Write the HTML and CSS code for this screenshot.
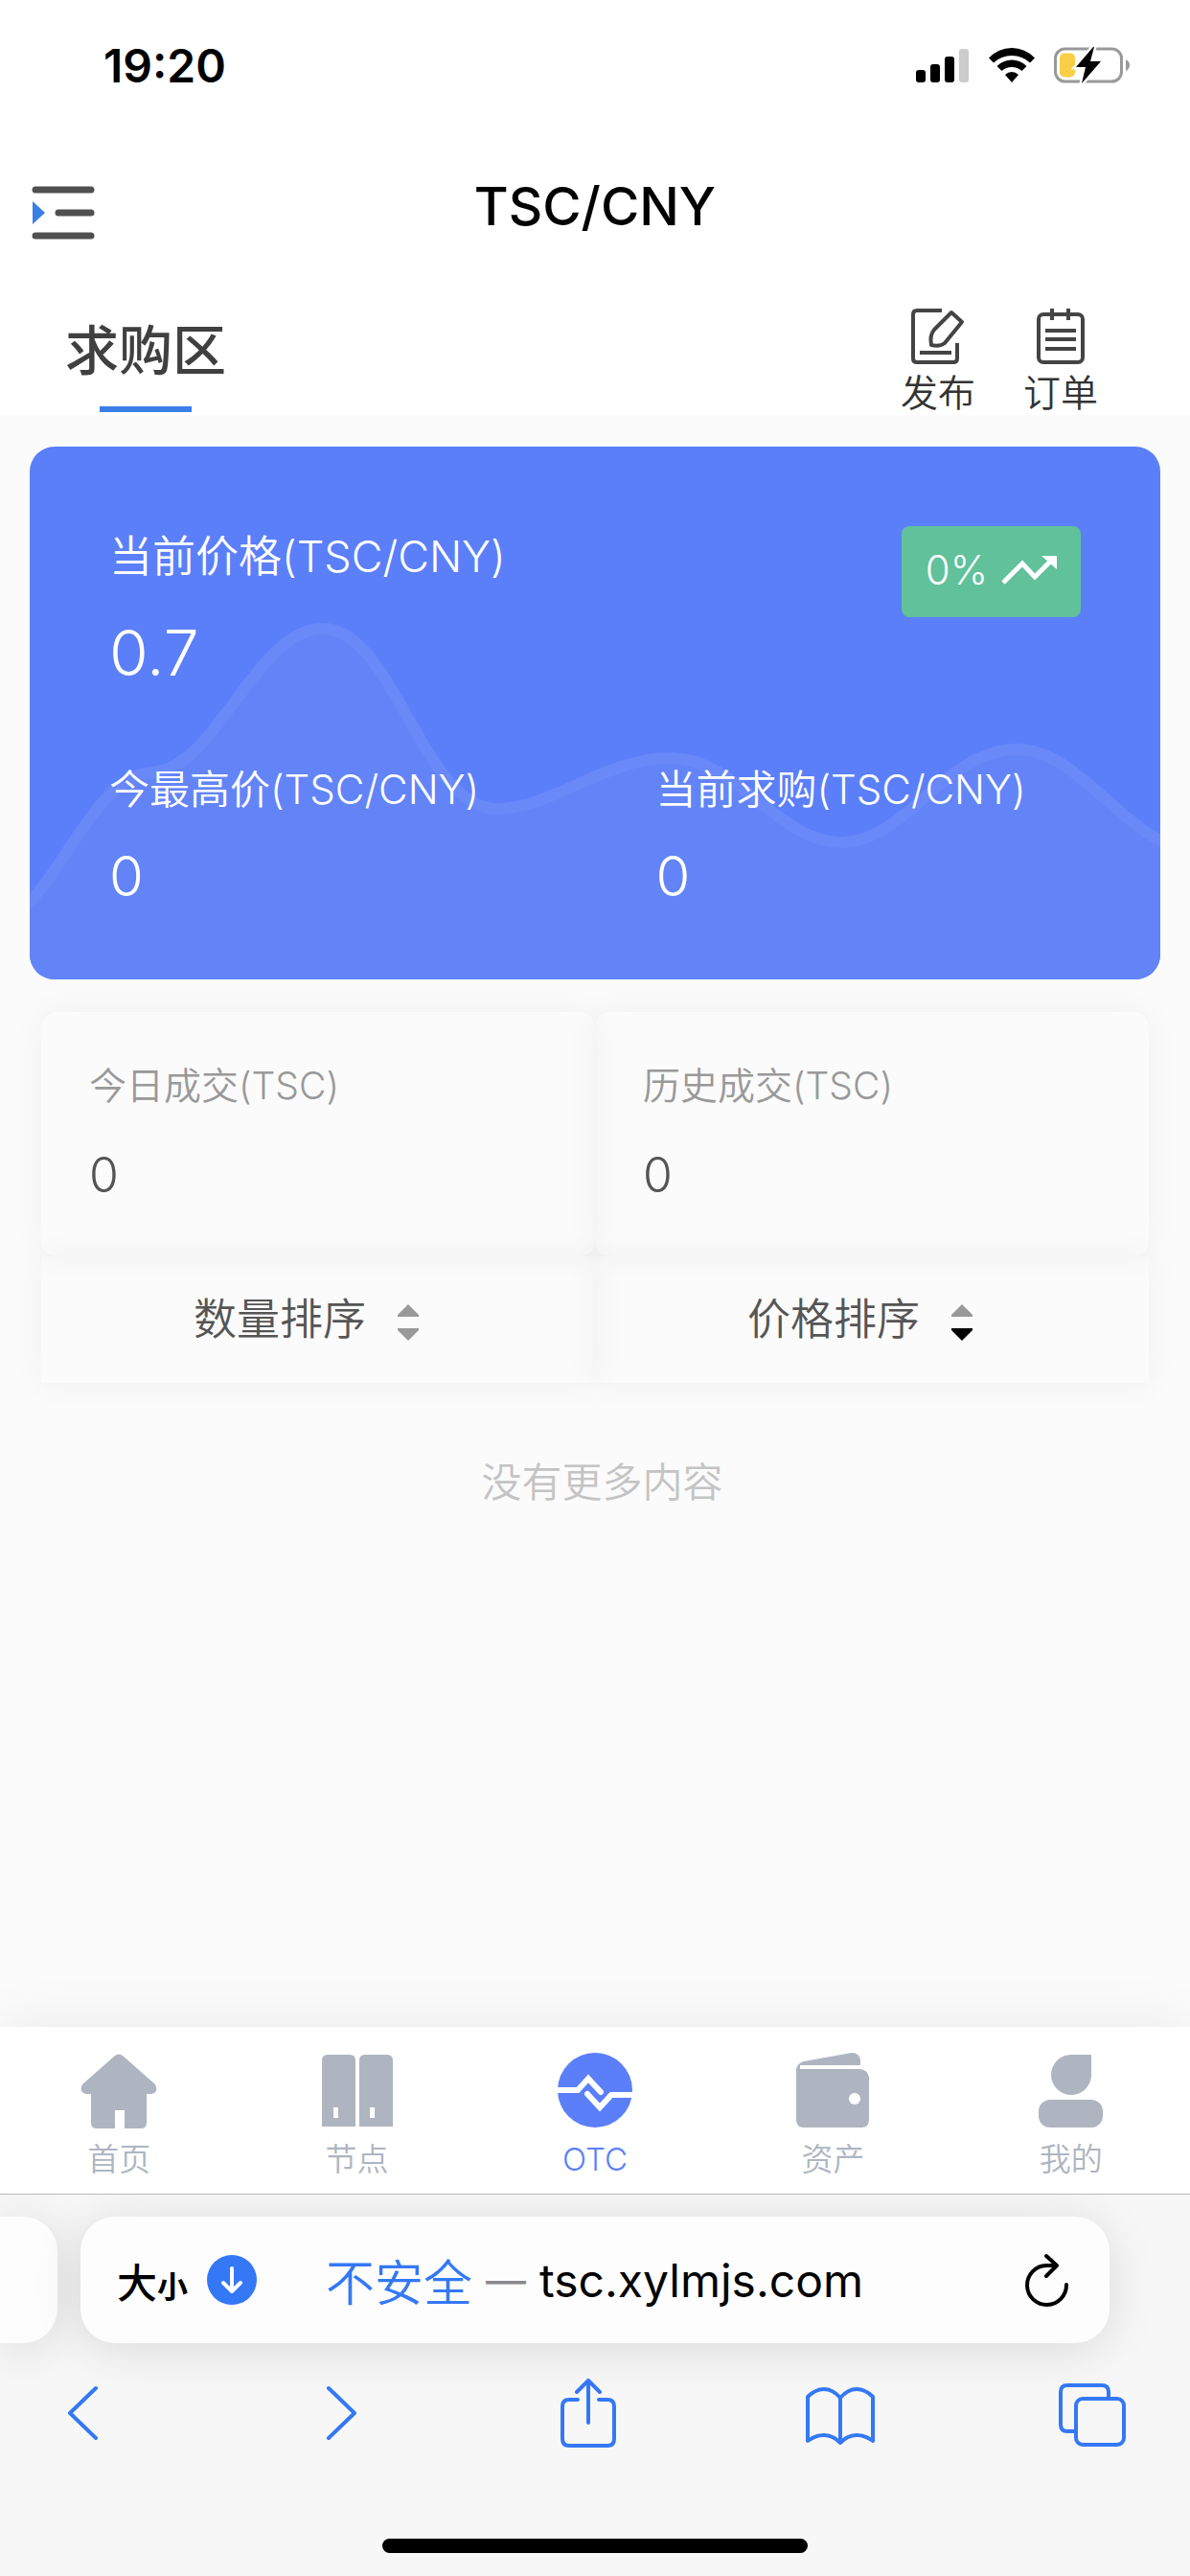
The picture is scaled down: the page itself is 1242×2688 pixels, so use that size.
FILE: index.html
```html
<!DOCTYPE html>
<html lang="zh-CN">
<head>
    <meta charset="UTF-8">
    <meta name="viewport" content="width=device-width, initial-scale=1.0">
    <title>TSC/CNY</title>
    <link rel="stylesheet" href="styles.css">
</head>
<body>
    <!-- 状态栏 -->
    <div class="status-bar">
        <span class="time">19:20</span>
        <div class="status-icons">
            <svg width="56" height="36" viewBox="0 0 56 36">
                <rect x="0" y="23" width="10" height="13" rx="3"/>
                <rect x="15" y="17" width="10" height="19" rx="3"/>
                <rect x="30" y="9" width="10" height="27" rx="3"/>
                <rect x="45" y="1" width="10" height="35" rx="3" fill="#ccc"/>
            </svg>
            <svg width="48" height="36" viewBox="0 0 48 36">
                <path d="M0 10.500Q10 0 24 0T48 10.500L43 15.500Q35 8 24 8T5 15.500Z"/>
                <path d="M8.500 19Q15 12.500 24 12.500T39.500 19L34.500 24Q30 20 24 20T13.500 24Z"/>
                <path d="M17 28Q20 25 24 25T31 28L24 36Z"/>
            </svg>
            <svg width="80" height="38" viewBox="0 0 80 38">
                <rect x="1.500" y="2" width="69" height="34" rx="10" fill="none" stroke="#999" stroke-width="3"/>
                <path d="M75 13Q79 15 79 19T75 25Z" fill="#999"/>
                <rect x="6" y="6.500" width="16" height="25" rx="5" fill="#f7ce46"/>
                <path d="M41 0L23 21H33L29 38L49 15H38L42 0Z" stroke="#fff" stroke-width="5"/>
                <path d="M41 0L23 21H33L29 38L49 15H38L42 0Z"/>
            </svg>
        </div>
    </div>

    <!-- 标题 -->
    <header class="nav-bar">
        <button class="menu-btn" aria-label="菜单">
            <svg width="66" height="56" viewBox="0 0 66 56">
                <path d="M4 4H62M28 28H62M4 52H62" stroke="#505050" stroke-width="7" stroke-linecap="round"/>
                <path d="M1 16L14 28L1 40Z" fill="#3a7ee8"/>
            </svg>
        </button>
        <h1>TSC/CNY</h1>
    </header>

    <div class="zone-bar">
        <h2 class="zone-tab">求购区</h2>
        <div class="zone-actions">
            <a href="#">
                <svg width="60" height="58" viewBox="0 0 60 58" fill="none" stroke="#444" stroke-width="4">
                    <path d="M34 2H8Q4 2 4 6V52Q4 56 8 56H46Q50 56 50 52V36M11 46H44"/>
                    <path d="M44 4L55 14L37 36Q32 40 23 38Q21 28 26 22Z" stroke-linejoin="round"/>
                </svg>
                <span>发布</span>
            </a>
            <a href="#">
                <svg width="60" height="58" viewBox="0 0 60 58" fill="none" stroke="#444" stroke-width="4">
                    <rect x="7" y="6" width="46" height="50" rx="5"/>
                    <path d="M21 0V12M38 0V12M14 23H46M14 32H46M14 42H46"/>
                </svg>
                <span>订单</span>
            </a>
        </div>
    </div>

    <main class="content">
        <!-- 价格卡片 -->
        <section class="price-card">
            <svg class="wave" viewBox="0 0 1180 556" preserveAspectRatio="none">
                <path d="M-10 485C40 440 70 345 127 340C195 338 235 190 306 190C380 190 410 378 488 378C545 378 600 325 669 325C740 325 780 413 847 413C915 413 955 316 1030 316C1090 316 1130 390 1190 416V570H-10Z" fill="#6384f7"/>
                <path d="M-10 485C40 440 70 345 127 340C195 338 235 190 306 190C380 190 410 378 488 378C545 378 600 325 669 325C740 325 780 413 847 413C915 413 955 316 1030 316C1090 316 1130 390 1190 416" fill="none" stroke="#6989f9" stroke-width="12"/>
            </svg>
            <div class="price-top">
                <div>
                    <div class="label">当前价格(TSC/CNY)</div>
                    <div class="price">0.7</div>
                </div>
                <div class="rate">
                    <span>0%</span>
                    <svg width="58" height="30" viewBox="0 0 58 30">
                        <path d="M2 28L22 8L35 22L51 6" fill="none" stroke="#fff" stroke-width="5"/>
                        <path d="M42 0H58V14Z" fill="#fff"/>
                    </svg>
                </div>
            </div>
            <div class="price-bottom">
                <div>
                    <div class="sub-label">今最高价(TSC/CNY)</div>
                    <div class="sub-value">0</div>
                </div>
                <div>
                    <div class="sub-label">当前求购(TSC/CNY)</div>
                    <div class="sub-value">0</div>
                </div>
            </div>
        </section>

        <!-- 成交统计 -->
        <section class="stats">
            <div class="stat">
                <div class="stat-label">今日成交(TSC)</div>
                <div class="stat-value">0</div>
            </div>
            <div class="stat">
                <div class="stat-label">历史成交(TSC)</div>
                <div class="stat-value">0</div>
            </div>
            <button class="sort">
                <span>数量排序</span>
                <svg width="24" height="40" viewBox="0 0 24 40" fill="#999">
                    <path d="M12 1L23 12V14H1V12Z"/>
                    <path d="M1 26H23V28L12 39L1 28Z"/>
                </svg>
            </button>
            <button class="sort">
                <span>价格排序</span>
                <svg width="24" height="40" viewBox="0 0 24 40" fill="#999">
                    <path d="M12 1L23 12V14H1V12Z"/>
                    <path d="M1 26H23V28L12 39L1 28Z" fill="#000"/>
                </svg>
            </button>
        </section>

        <p class="no-more">没有更多内容</p>
    </main>

    <!-- 底部导航 -->
    <nav class="tab-bar">
        <a href="#">
            <svg width="80" height="80" viewBox="0 0 80 80">
                <path d="M36 3Q40 0 44 3L78 33Q82 42 74 43H69V73Q69 79 63 79H46V60H36V79H17Q11 79 11 73V43H6Q-2 42 2 33Z"/>
            </svg>
            <span>首页</span>
        </a>
        <a href="#">
            <svg width="80" height="80" viewBox="0 0 80 80">
                <path fill-rule="evenodd" d="M9 2H32Q38 2 38 8V77H3V8Q3 2 9 2ZM15 57V68H20V57ZM48 2H71Q77 2 77 8V77H42V8Q42 2 48 2ZM53 57V68H58V57Z"/>
            </svg>
            <span>节点</span>
        </a>
        <a href="#" class="active">
            <svg width="80" height="80" viewBox="0 0 80 80">
                <circle cx="40" cy="39" r="39"/>
                <path d="M0 39H22L33 27L46 41M32 43L45 57L57 44H80" fill="none" stroke="#fff" stroke-width="6" stroke-linecap="round"/>
            </svg>
            <span>OTC</span>
        </a>
        <a href="#">
            <svg width="80" height="80" viewBox="0 0 80 80">
                <path d="M10 9L60 0Q68 0 69 8V13H14Q7 13 7 17H69Q77 18 78 26V70Q78 77 71 78H9Q2 77 2 70V17Q3 11 10 9Z"/>
                <path d="M6 15H62" stroke="#fff" stroke-width="4"/>
                <circle cx="63" cy="48" r="6" fill="#fff"/>
            </svg>
            <span>资产</span>
        </a>
        <a href="#">
            <svg width="80" height="80" viewBox="0 0 80 80">
                <path d="M40 2H61V24A21 21 0 1 1 40 2Z"/>
                <rect x="6" y="49" width="67" height="29" rx="12"/>
            </svg>
            <span>我的</span>
        </a>
    </nav>

    <!-- 浏览器工具栏 -->
    <footer class="browser">
        <div class="address-row">
            <div class="prev-page"></div>
            <div class="address">
                <button class="text-size" aria-label="大小"><span class="big">大</span><span class="small">小</span></button>
                <button aria-label="下载">
                    <svg width="52" height="52" viewBox="0 0 52 52">
                        <circle cx="26" cy="26" r="26" fill="#3478f6"/>
                        <path d="M26 14V38M17 29L26 38L35 29" fill="none" stroke="#fff" stroke-width="4" stroke-linecap="round" stroke-linejoin="round"/>
                    </svg>
                </button>
                <div class="url"><span class="insecure">不安全</span><span class="dash">—</span><span>tsc.xylmjs.com</span></div>
                <button aria-label="刷新">
                    <svg width="46" height="56" viewBox="0 0 46 56" fill="none" stroke="#000" stroke-width="4" stroke-linecap="round" stroke-linejoin="round">
                        <path d="M43 33A20.500 20.500 0 1 1 22 13H32M22 3L33 13L22 24"/>
                    </svg>
                </button>
            </div>
        </div>
        <div class="toolbar">
            <button aria-label="后退">
                <svg width="72" height="72" viewBox="0 0 72 72"><path d="M50 10L23 36L50 62"/></svg>
            </button>
            <button aria-label="前进">
                <svg width="72" height="72" viewBox="0 0 72 72"><path d="M29 10L56 36L29 62"/></svg>
            </button>
            <button aria-label="分享">
                <svg width="72" height="72" viewBox="0 0 72 72"><path d="M26 22H17Q10 22 10 29V63Q10 70 17 70H57Q64 70 64 63V29Q64 22 57 22H48M37 46V3M25 14L37 2L49 14"/></svg>
            </button>
            <button aria-label="书签">
                <svg width="72" height="72" viewBox="0 0 72 72"><path d="M36 20Q28 11 19 11T2 19V65Q10 59 19 59T36 67Q44 59 53 59T70 65V19Q62 11 53 11T36 20V66"/></svg>
            </button>
            <button aria-label="标签页">
                <svg width="72" height="72" viewBox="0 0 72 72"><rect x="19" y="21" width="50" height="48" rx="7"/><path d="M19 55H10Q3 55 3 48V14Q3 7 10 7H46Q53 7 53 14V21"/></svg>
            </button>
        </div>
        <div class="home-indicator"></div>
    </footer>
</body>
</html>
```
FILE: styles.css
```css
* {
    box-sizing: border-box;
}
body {
    margin: 0;
    min-height: 100vh;
    display: flex;
    flex-direction: column;
    font-family: Inter, 'Noto Sans CJK SC', sans-serif;
    font-weight: 350;
    background-color: #fbfbfb;
    color: #333;
}
h1, h2, p {
    margin: 0;
}
svg {
    display: block;
    flex-shrink: 0;
}
button {
    padding: 0;
    border: none;
    background: none;
    font: inherit;
    color: inherit;
    cursor: pointer;
}
a {
    color: inherit;
    text-decoration: none;
}

/* 顶部 */
.status-bar {
    height: 136px;
    padding: 0 62px 0 108px;
    display: flex;
    align-items: center;
    justify-content: space-between;
    background-color: #fff;
    color: #000;
}
.time {
    font-size: 48px;
    font-weight: 600;
}
.status-icons {
    display: flex;
    align-items: center;
    gap: 20px;
}
.nav-bar {
    height: 160px;
    padding: 0 33px;
    display: grid;
    grid-template-columns: 66px 1fr 66px;
    align-items: center;
    background-color: #fff;
    color: #000;
}
.menu-btn {
    padding-top: 12px;
}
h1 {
    padding-bottom: 2px;
    font-size: 55px;
    font-weight: 500;
    text-align: center;
}
.zone-bar {
    height: 137px;
    padding: 0 80px 0 68px;
    display: flex;
    justify-content: space-between;
    background-color: #fff;
}
.zone-tab {
    display: flex;
    flex-direction: column;
    align-items: center;
    justify-content: space-between;
    padding: 30px 0 3px;
    font-size: 56px;
    line-height: 80px;
    font-weight: 500;
    color: #404040;
}
.zone-tab::after {
    content: '';
    width: 96px;
    height: 6px;
    background-color: #3a7ee8;
}
.zone-actions {
    display: flex;
    gap: 50px;
    padding: 26px 16px 0 0;
}
.zone-actions a {
    display: flex;
    flex-direction: column;
    align-items: center;
    font-size: 39px;
    line-height: 60px;
}

/* 价格卡片 */
.content {
    flex: 1;
    padding-top: 33px;
}
.price-card {
    position: relative;
    height: 556px;
    margin: 0 31px;
    padding: 83px 0 0 83px;
    border-radius: 26px;
    overflow: hidden;
    background-color: #5b7ff9;
    color: #fff;
}
.wave {
    position: absolute;
    left: 0;
    top: 0;
    width: 100%;
    height: 100%;
}
.price-top {
    position: relative;
    height: 240px;
    padding-right: 83px;
    display: flex;
    justify-content: space-between;
    align-items: flex-start;
}
.label {
    font-size: 45px;
    line-height: 64px;
}
.price {
    margin-top: 28px;
    font-size: 66px;
    line-height: 80px;
}
.rate {
    display: flex;
    align-items: center;
    gap: 14px;
    height: 95px;
    padding: 0 25px 4px;
    border-radius: 8px;
    background-color: #60c19b;
    font-size: 42px;
}
.price-bottom {
    position: relative;
    display: grid;
    grid-template-columns: 52% 48%;
}
.sub-label {
    font-size: 42px;
    line-height: 70px;
}
.sub-value {
    margin-top: 20px;
    font-size: 58px;
    line-height: 70px;
}

/* 成交统计 */
.stats {
    display: grid;
    grid-template-columns: 1fr 1fr;
    margin: 34px 43px 0;
}
.stat {
    height: 255px;
    padding: 47px 50px 0;
    border-radius: 16px;
    box-shadow: 0 0 32px rgba(0, 0, 0, 0.05);
}
.stat-label {
    font-size: 39px;
    line-height: 60px;
    color: #999;
}
.stat-value {
    margin-top: 33px;
    font-size: 50px;
    line-height: 60px;
    color: #555;
}
.sort {
    display: flex;
    align-items: center;
    justify-content: center;
    gap: 32px;
    height: 132px;
    padding-right: 24px;
    box-shadow: 0 0 32px rgba(0, 0, 0, 0.05);
    font-size: 45px;
    color: #555;
}
.sort span {
    padding-bottom: 8px;
}
.sort svg {
    margin-top: 6px;
}
.no-more {
    margin-top: 74px;
    padding-left: 15px;
    font-size: 42px;
    line-height: 60px;
    text-align: center;
    color: #c4c4c4;
}

/* 底部导航 */
.tab-bar {
    display: grid;
    grid-template-columns: repeat(5, 1fr);
    height: 175px;
    padding-top: 27px;
    border-bottom: 1px solid #b8bab8;
    background-color: #fff;
    box-shadow: 0 0 60px rgba(0, 0, 0, 0.08);
    color: #aeb5c0;
}
.tab-bar a {
    display: flex;
    flex-direction: column;
    align-items: center;
    gap: 9px;
    font-size: 33px;
    line-height: 44px;
}
.tab-bar svg {
    fill: currentColor;
}
.tab-bar .active {
    color: #5b7ff9;
}

/* 浏览器工具栏 */
.browser {
    position: relative;
    height: 398px;
    overflow: hidden;
    background-color: #f7f7f7;
}
.address-row {
    display: flex;
    gap: 24px;
    padding: 23px 84px 0 0;
}
.prev-page {
    width: 60px;
    height: 132px;
    border-radius: 0 36px 36px 0;
    background-color: #fdfdfd;
    box-shadow: 0 6px 50px rgba(0, 0, 0, 0.12);
}
.address {
    flex: 1;
    display: flex;
    align-items: center;
    height: 132px;
    padding: 0 42px 0 38px;
    border-radius: 36px;
    background-color: #fdfdfd;
    box-shadow: 0 6px 50px rgba(0, 0, 0, 0.12);
    color: #000;
}
.text-size {
    margin-right: 20px;
    font-weight: 500;
}
.big {
    font-size: 42px;
}
.small {
    font-size: 32px;
    font-weight: 700;
}
.url {
    flex: 1;
    display: flex;
    align-items: center;
    gap: 14px;
    padding-left: 72px;
    font-size: 48px;
    font-weight: 400;
}
.insecure {
    font-size: 51px;
    font-weight: 350;
    color: #3478f6;
}
.dash {
    font-size: 42px;
    color: #8a8a8e;
}
.toolbar {
    display: flex;
    justify-content: space-between;
    padding: 37px 66px 0 50px;
}
.toolbar svg {
    fill: none;
    stroke: #3478f6;
    stroke-width: 4;
    stroke-linecap: round;
    stroke-linejoin: round;
}
.home-indicator {
    width: 444px;
    height: 15px;
    margin: 95px auto 0;
    border-radius: 8px;
    background-color: #000;
}
```
